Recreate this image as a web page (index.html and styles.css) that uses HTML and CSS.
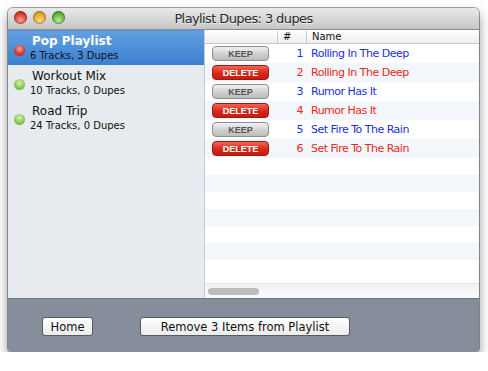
FILE: index.html
```html
<!DOCTYPE html>
<html lang="en">
<head>
    <meta charset="UTF-8">
    <title>Playlist Dupes</title>
    <link rel="stylesheet" href="styles.css">
</head>
<body>
    <div class="window">
        <div class="titlebar">
            <div class="lights">
                <span class="light red"></span>
                <span class="light yellow"></span>
                <span class="light green"></span>
            </div>
            <div class="title">Playlist Dupes: 3 dupes</div>
        </div>

        <div class="main">
            <div class="sidebar">
                <div class="playlist selected">
                    <span class="dot red"></span>
                    <div class="info">
                        <div class="pl-name">Pop Playlist</div>
                        <div class="pl-sub">6 Tracks, 3 Dupes</div>
                    </div>
                </div>
                <div class="playlist">
                    <span class="dot green"></span>
                    <div class="info">
                        <div class="pl-name">Workout Mix</div>
                        <div class="pl-sub">10 Tracks, 0 Dupes</div>
                    </div>
                </div>
                <div class="playlist">
                    <span class="dot green"></span>
                    <div class="info">
                        <div class="pl-name">Road Trip</div>
                        <div class="pl-sub">24 Tracks, 0 Dupes</div>
                    </div>
                </div>
            </div>

            <div class="tracks">
                <div class="header">
                    <div class="col-btn"></div>
                    <div class="col-num">#</div>
                    <div class="col-name">Name</div>
                </div>
                <div class="rows">
                    <div class="row keep">
                        <div class="col-btn"><button class="btn-keep">KEEP</button></div>
                        <div class="col-num">1</div>
                        <div class="col-name">Rolling In The Deep</div>
                    </div>
                    <div class="row delete">
                        <div class="col-btn"><button class="btn-delete">DELETE</button></div>
                        <div class="col-num">2</div>
                        <div class="col-name">Rolling In The Deep</div>
                    </div>
                    <div class="row keep">
                        <div class="col-btn"><button class="btn-keep">KEEP</button></div>
                        <div class="col-num">3</div>
                        <div class="col-name">Rumor Has It</div>
                    </div>
                    <div class="row delete">
                        <div class="col-btn"><button class="btn-delete">DELETE</button></div>
                        <div class="col-num">4</div>
                        <div class="col-name">Rumor Has It</div>
                    </div>
                    <div class="row keep">
                        <div class="col-btn"><button class="btn-keep">KEEP</button></div>
                        <div class="col-num">5</div>
                        <div class="col-name">Set Fire To The Rain</div>
                    </div>
                    <div class="row delete">
                        <div class="col-btn"><button class="btn-delete">DELETE</button></div>
                        <div class="col-num">6</div>
                        <div class="col-name">Set Fire To The Rain</div>
                    </div>
                    <div class="row empty"></div>
                    <div class="row empty"></div>
                    <div class="row empty"></div>
                    <div class="row empty"></div>
                    <div class="row empty"></div>
                    <div class="row empty"></div>
                    <div class="row empty"></div>
                </div>
                <div class="hscroll">
                    <div class="thumb"></div>
                </div>
            </div>
        </div>

        <div class="footer">
            <button class="btn-home">Home</button>
            <button class="btn-remove">Remove 3 Items from Playlist</button>
        </div>
    </div>
</body>
</html>
```

FILE: styles.css
```css
body {
    margin: 0;
    background-color: white;
    font-family: "DejaVu Sans", sans-serif;
}
.window {
    margin: 8px 0 0 8px;
    width: 471px;
    height: 344px;
    border-radius: 5px 5px 4px 4px;
    overflow: hidden;
    display: flex;
    flex-direction: column;
    box-shadow: 0 0 0 1px rgba(0, 0, 0, 0.35), 0 6px 12px rgba(0, 0, 0, 0.45);
}
.titlebar {
    height: 21px;
    flex-shrink: 0;
    position: relative;
    display: flex;
    align-items: center;
    justify-content: center;
    background: linear-gradient(#e9e9e9, #c6c6c6);
    border-bottom: 1px solid #8c8c8c;
}
.lights {
    position: absolute;
    left: 6px;
    top: 3px;
    display: flex;
    gap: 6px;
}
.light {
    width: 13px;
    height: 13px;
    border-radius: 50%;
    box-shadow: inset 0 0 0 1px rgba(0, 0, 0, 0.25);
}
.light.red {
    background: radial-gradient(circle at 50% 70%, #f4a39a, #d8362b 60%, #a8221b);
}
.light.yellow {
    background: radial-gradient(circle at 50% 70%, #f8d98a, #e0a221 60%, #b07a14);
}
.light.green {
    background: radial-gradient(circle at 50% 70%, #bde69c, #56b02f 60%, #3d8a20);
}
.title {
    font-size: 13px;
    letter-spacing: -0.6px;
    color: #2a2a2a;
    text-shadow: 0 1px 0 rgba(255, 255, 255, 0.6);
}
.main {
    height: 268px;
    display: flex;
    flex-shrink: 0;
}
.sidebar {
    width: 196px;
    background-color: #e7eaee;
    border-right: 1px solid #c7cbd1;
}
.playlist {
    height: 35px;
    display: flex;
    align-items: center;
    gap: 5px;
    padding-left: 6px;
}
.playlist.selected {
    background: linear-gradient(#62a0e0, #3b7fcf);
    border-top: 1px solid #5b96d6;
    height: 34px;
}
.dot {
    width: 11px;
    height: 11px;
    border-radius: 50%;
    flex-shrink: 0;
    margin-top: 4px;
}
.dot.red {
    background: radial-gradient(circle at 50% 35%, #f7a7a0, #e0372e 55%, #b3201a);
}
.dot.green {
    background: radial-gradient(circle at 50% 35%, #d6f0b4, #8bc858 55%, #5f9e35);
}
.pl-name {
    font-size: 12px;
    color: #111;
    line-height: 15px;
    padding-left: 2px;
}
.pl-sub {
    font-size: 10px;
    color: #111;
    line-height: 13px;
}
.selected .pl-name {
    color: white;
    font-weight: bold;
}
.tracks {
    flex: 1;
    background-color: white;
    display: flex;
    flex-direction: column;
}
.header {
    height: 12px;
    display: flex;
    font-size: 10px;
    line-height: 12px;
    color: #111;
    background: linear-gradient(#ffffff, #eeeeee);
    border-bottom: 1px solid #c8c8c8;
    margin-top: 1px;
}
.header .col-num,
.header .col-name {
    border-left: 1px solid #c8c8c8;
}
.header .col-num {
    text-align: left;
    padding-left: 5px;
    padding-right: 0;
}
.col-btn {
    width: 72px;
    padding-left: 7px;
    box-sizing: border-box;
}
.col-num {
    width: 29px;
    text-align: right;
    padding-right: 3px;
    box-sizing: border-box;
}
.col-name {
    flex: 1;
    padding-left: 5px;
}
.rows {
    flex: 1;
    overflow: hidden;
}
.row {
    height: 19px;
    display: flex;
    align-items: center;
    font-size: 11px;
    letter-spacing: -0.5px;
}
.row:nth-child(even) {
    background-color: #f3f6fa;
}
.row.empty {
    height: 17px;
}
.row.keep {
    color: #1c2fd6;
}
.row.delete {
    color: #e5291c;
}
.btn-keep,
.btn-delete {
    width: 57px;
    height: 15px;
    border-radius: 4px;
    font-family: "Liberation Sans", sans-serif;
    font-size: 9px;
    font-weight: bold;
    letter-spacing: 0;
    padding: 0;
    display: block;
}
.btn-keep {
    background: linear-gradient(#f2f2f2, #cfcfcf 55%, #bdbdbd);
    border: 1px solid #8f8f8f;
    color: #555;
}
.btn-delete {
    background: linear-gradient(#f26552, #d8281a 55%, #c41d12);
    border: 1px solid #9a1a10;
    color: white;
}
.hscroll {
    height: 14px;
    background: linear-gradient(#f0f2f5, #fafafa);
    border-top: 1px solid #e3e6ea;
    display: flex;
    align-items: center;
    padding-left: 3px;
}
.thumb {
    width: 51px;
    height: 7px;
    border-radius: 4px;
    background-color: #bcbcbc;
}
.footer {
    flex: 1;
    background-color: #878e9b;
    border-top: 1px solid #6e7580;
    display: flex;
    align-items: center;
    padding-top: 2px;
    padding-left: 34px;
    gap: 47px;
}
.btn-home,
.btn-remove {
    height: 19px;
    background: linear-gradient(#ffffff, #ececec);
    border: 1px solid #555b66;
    border-radius: 3px;
    font-family: "DejaVu Sans", sans-serif;
    font-size: 11.5px;
    color: #111;
    padding: 0;
}
.btn-home {
    width: 51px;
}
.btn-remove {
    width: 210px;
}
```
